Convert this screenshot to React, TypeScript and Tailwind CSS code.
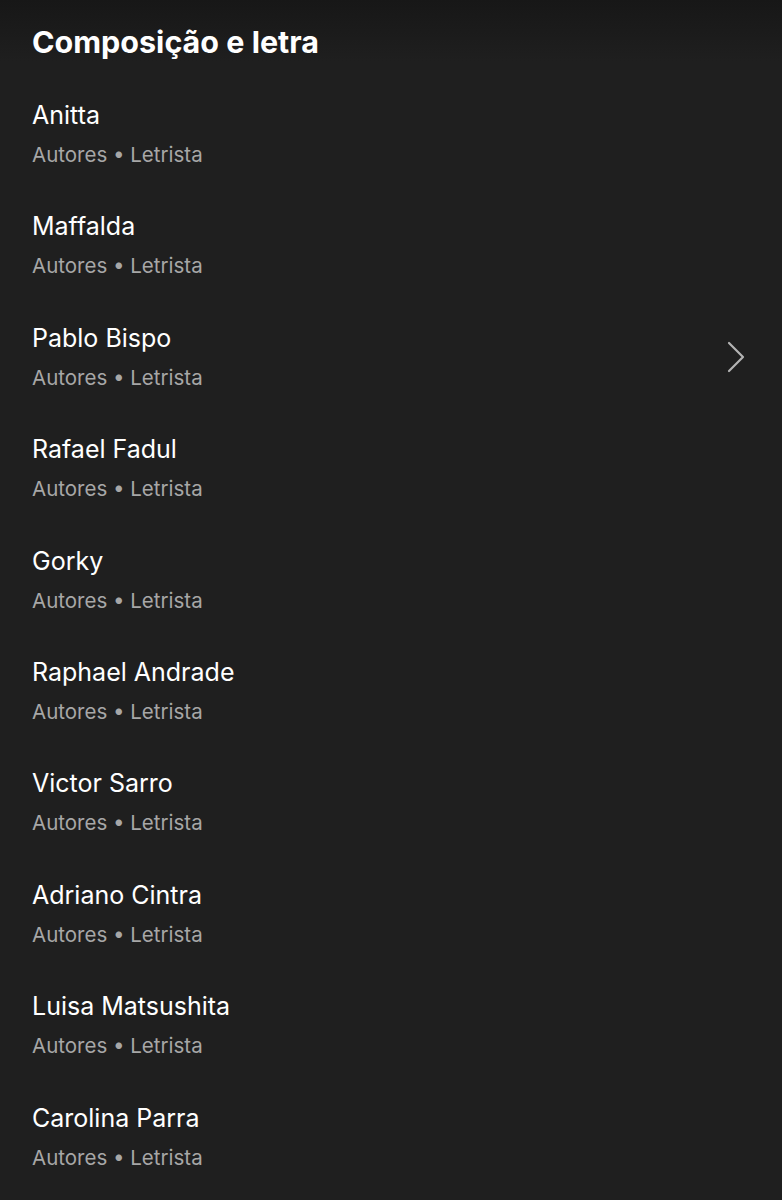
const credits = [
  'Anitta',
  'Maffalda',
  'Pablo Bispo',
  'Rafael Fadul',
  'Gorky',
  'Raphael Andrade',
  'Victor Sarro',
  'Adriano Cintra',
  'Luisa Matsushita',
  'Carolina Parra'
]

function Chevron() {
  return (
    <svg width="20" height="32" viewBox="0 0 20 32" fill="none" className="text-[#b3b3b3]">
      <path d="M3 2 L17 16 L3 30" stroke="currentColor" strokeWidth="2.2" strokeLinecap="round" strokeLinejoin="round" />
    </svg>
  )
}

export default function App() {
  return (
    <div className="min-h-[1200px] w-full bg-[#1f1f1f] font-['Inter',sans-serif]">
      <div className="bg-gradient-to-b from-[#171717] to-[#1f1f1f] px-8 pt-[22px]">
        <h1 className="text-[30.5px] font-bold leading-[40px] text-white">Composição e letra</h1>
      </div>
      <ul className="mt-[24px] flex flex-col">
        {credits.map((name, i) => (
          <li key={name} className="flex h-[111.4px] items-start pl-8 pr-[36px] pt-[13px]">
            <div className="flex flex-1 items-center">
              <div className="flex flex-1 flex-col gap-[10px]">
                <span className="text-[25px] leading-[32px] text-white">{name}</span>
                <span className="text-[20.5px] leading-[28px] text-[#a7a7a7]">Autores • Letrista</span>
              </div>
              {i === 2 && <Chevron />}
            </div>
          </li>
        ))}
      </ul>
    </div>
  )
}
